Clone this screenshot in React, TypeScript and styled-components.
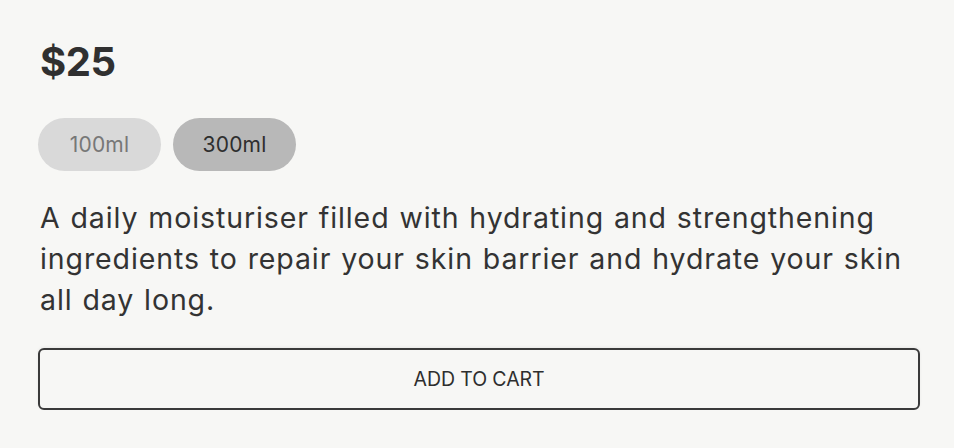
import styled, { createGlobalStyle } from "styled-components"
import { useState } from "react"

const GlobalStyle = createGlobalStyle`
  html, body {
    margin: 0;
    padding: 0;
    background: #f7f7f5;
  }
  body {
    font-family: "Inter", "Liberation Sans", sans-serif;
    color: #333333;
  }
`

const Panel = styled.div`
  display: flex;
  flex-direction: column;
  padding: 36px 34px 0 38px;
`

const Price = styled.h2`
  margin: 0 0 0 2px;
  font-size: 40px;
  font-weight: 700;
  line-height: 52px;
  letter-spacing: -0.5px;
  color: #303030;
`

const SizeRow = styled.div`
  display: flex;
  gap: 12px;
  margin-top: 30px;
`

const SizePill = styled.button<{ $active: boolean }>`
  width: 123px;
  height: 53px;
  border: none;
  border-radius: 27px;
  font-family: inherit;
  font-size: 21px;
  letter-spacing: 0.2px;
  cursor: pointer;
  background: ${(p) => (p.$active ? "#b8b8b8" : "#d9d9d9")};
  color: ${(p) => (p.$active ? "#2e2e2e" : "#777777")};
`

const Description = styled.p`
  margin: 26px 0 0 2px;
  font-size: 28.5px;
  line-height: 41px;
  letter-spacing: 0.9px;
  word-spacing: 1px;
  color: #333333;
  max-width: 872px;
`

const CartButton = styled.button`
  margin-top: 28px;
  height: 62px;
  width: 882px;
  border: 2px solid #3a3a3a;
  border-radius: 6px;
  background: #f7f7f5;
  box-shadow: 0 -1px 3px rgba(0, 0, 0, 0.06);
  font-family: inherit;
  font-size: 19.5px;
  color: #2e2e2e;
  letter-spacing: -0.1px;
  cursor: pointer;
`

const sizes = ["100ml", "300ml"]

export default function App() {
  const [selected, setSelected] = useState("300ml")
  return (
    <>
      <GlobalStyle />
      <Panel>
        <Price>$25</Price>
        <SizeRow>
          {sizes.map((s) => (
            <SizePill key={s} $active={s === selected} onClick={() => setSelected(s)}>
              {s}
            </SizePill>
          ))}
        </SizeRow>
        <Description>
          A daily moisturiser filled with hydrating and strengthening ingredients to repair your skin barrier and hydrate your skin all day long.
        </Description>
        <CartButton type="button">ADD TO CART</CartButton>
      </Panel>
    </>
  )
}
